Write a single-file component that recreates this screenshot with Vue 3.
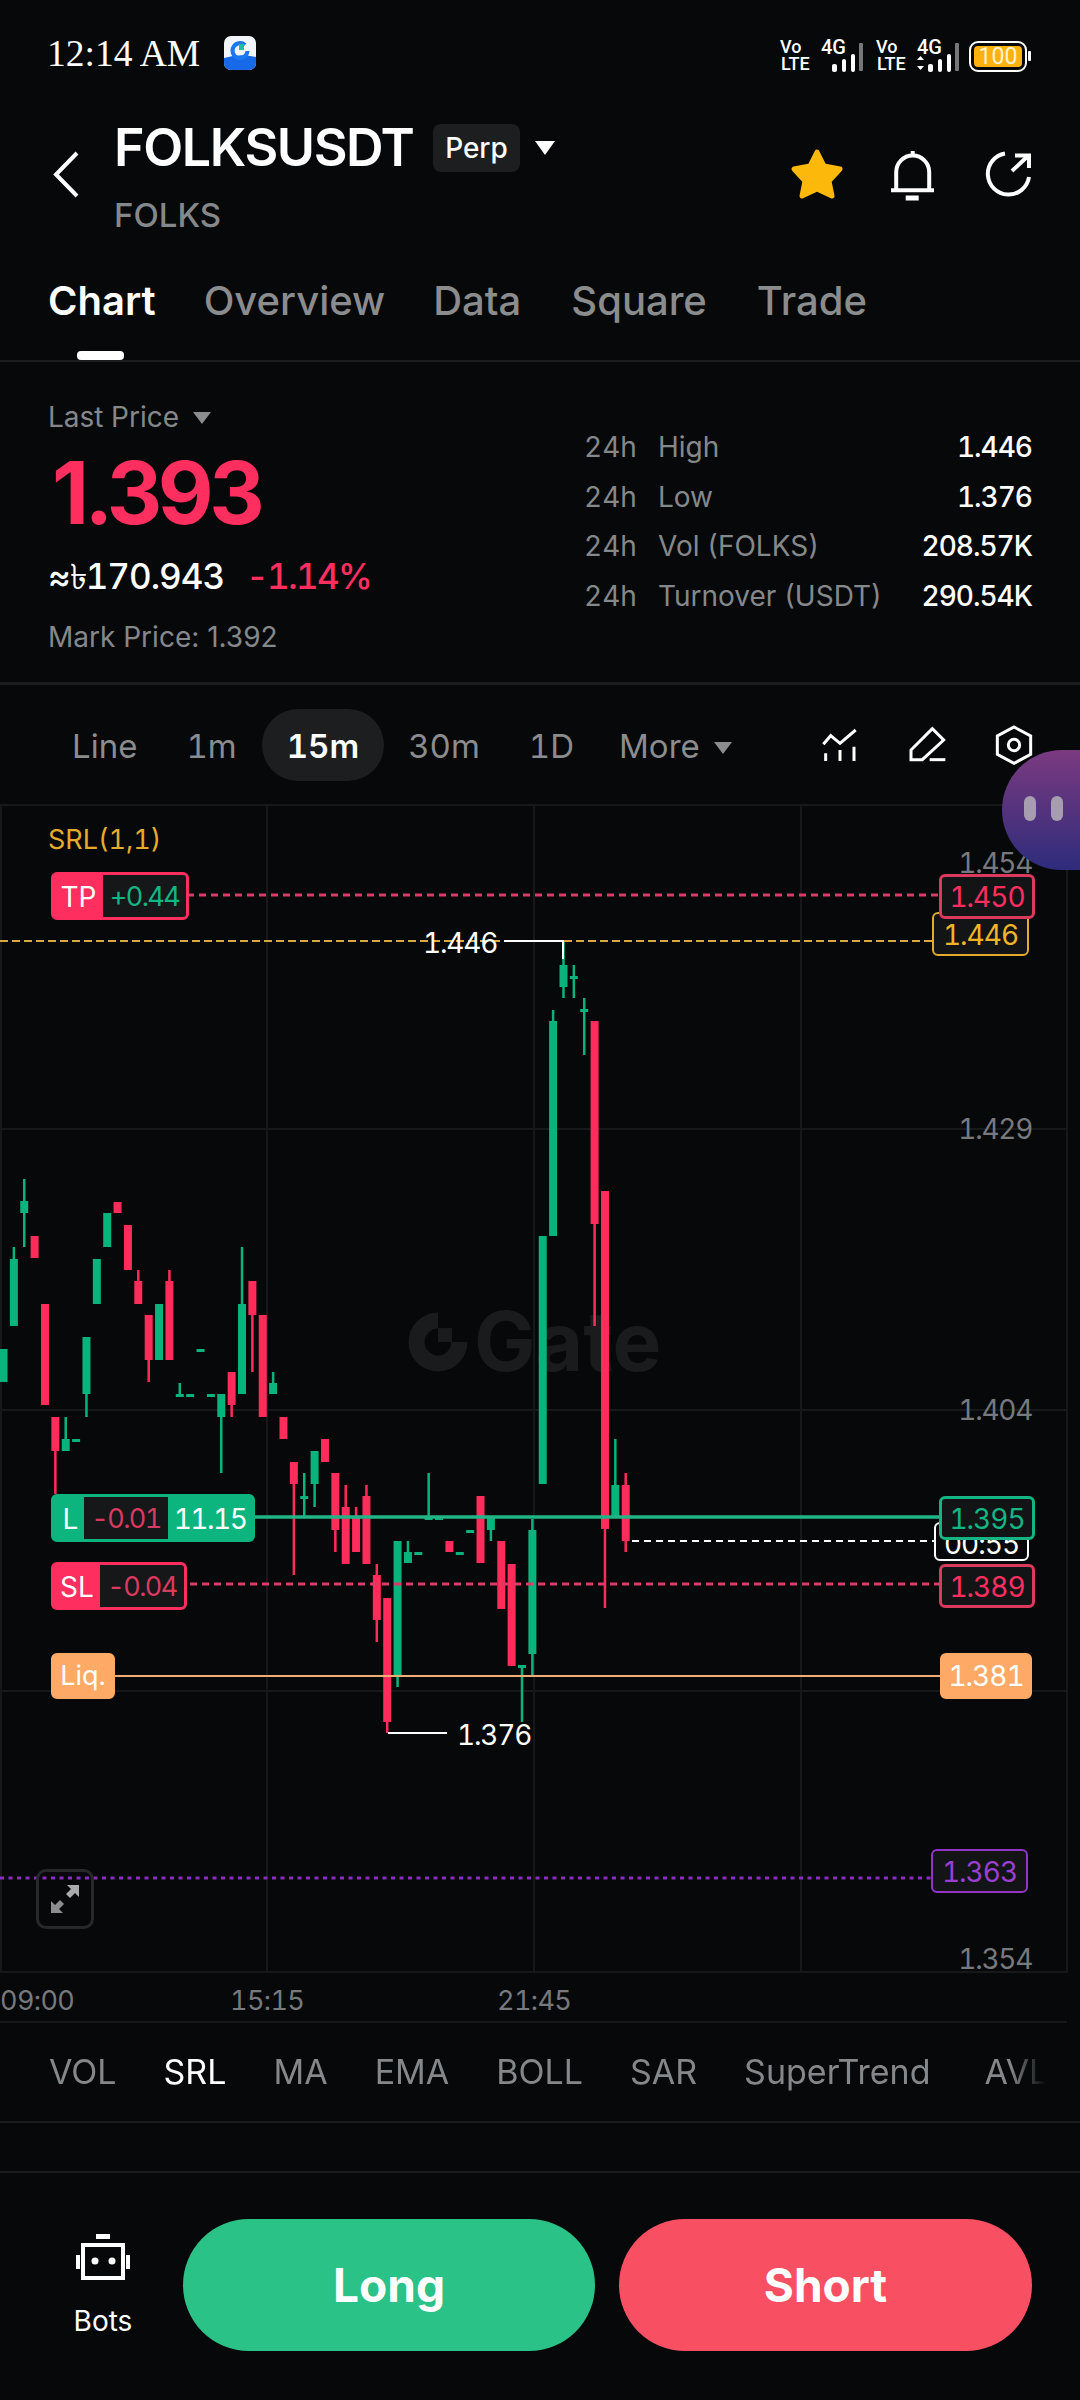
<template>
  <div class="page">
    <div class="status">
      <span class="clock">12:14 AM</span>
      <svg class="app-icon" viewBox="0 0 32 34">
        <rect width="32" height="34" rx="7" fill="#f2f6fc" />
        <path d="M0 22 Q16 17 32 21 V27 a7 7 0 0 1 -7 7 H7 a7 7 0 0 1 -7 -7Z" fill="#1769e8" />
        <path d="M21 9 A7.5 7.5 0 1 0 23.5 15" fill="none" stroke="#1a78f0" stroke-width="4" />
        <rect x="15" y="8" width="5" height="6" fill="#19c2a0" />
      </svg>
      <svg class="net" viewBox="775 30 260 46">
        <g class="net-text">
          <text x="780" y="51">Vo</text>
          <text x="781" y="68">LTE</text>
          <text x="821" y="52" class="big">4G</text>
          <text x="876" y="51">Vo</text>
          <text x="877" y="68">LTE</text>
          <text x="917" y="52" class="big">4G</text>
        </g>
        <g fill="#fff">
          <rect x="832" y="62" width="5" height="8" rx="2" />
          <rect x="842" y="57" width="4" height="13" rx="2" />
          <rect x="851" y="52" width="4" height="18" rx="2" />
          <path d="M917 57 l3.5 -4 l3.5 4Z M917 63 l3.5 4 l3.5 -4Z" transform="translate(0 1)" />
          <rect x="928" y="62" width="5" height="8" rx="2" />
          <rect x="938" y="57" width="4" height="13" rx="2" />
          <rect x="947" y="52" width="4" height="18" rx="2" />
        </g>
        <rect x="859" y="41" width="4" height="28" rx="1" fill="#777" />
        <rect x="955" y="41" width="4" height="28" rx="1" fill="#777" />
        <rect x="970" y="40" width="56" height="29" rx="8" fill="none" stroke="#fff" stroke-width="2" />
        <rect x="974" y="44" width="48" height="21" rx="4" fill="#fdb10e" />
        <rect x="1028" y="49" width="3" height="10" rx="1" fill="#fff" />
        <text x="998" y="62" class="batt">100</text>
      </svg>
    </div>

    <div class="header">
      <svg class="back" viewBox="0 0 30 50">
        <path d="M25 3 L4 24.5 L25 46" fill="none" stroke="#fff" stroke-width="4" />
      </svg>
      <div class="title">
        <div class="title-row">
          <span class="symbol">FOLKSUSDT</span>
          <span class="perp">Perp</span>
          <i class="caret caret-white"></i>
        </div>
        <div class="base">FOLKS</div>
      </div>
      <div class="actions">
        <svg class="star" viewBox="0 0 56 52">
          <path d="M28 4 L35 18 L51 21 L40 33 L43 48 L28 41 L13 48 L16 33 L5 21 L21 18Z" fill="#fdb90b" stroke="#fdb90b" stroke-width="5" stroke-linejoin="round" />
        </svg>
        <svg class="bell" viewBox="0 0 50 54">
          <g fill="none" stroke="#fff" stroke-width="4">
            <path d="M24.7 4 V9" />
            <path d="M8.2 43 V25 a16.5 16.5 0 0 1 33 0 V43" />
            <path d="M3 43.3 H46" />
          </g>
          <rect x="17.7" y="48.5" width="13" height="5" fill="#fff" />
        </svg>
        <svg class="share" viewBox="0 0 54 54">
          <g fill="none" stroke="#fff" stroke-width="4">
            <path d="M23 6.5 A20.7 20.7 0 1 0 47 30" />
            <path d="M30 24 L46 9" />
            <path d="M33 8.5 H47 V21" />
          </g>
        </svg>
      </div>
    </div>

    <div class="tabs">
      <span v-for="t in tabs" :key="t" class="tab" :class="{ active: t === 'Chart' }">{{ t }}</span>
    </div>

    <div class="summary">
      <div class="price-col">
        <div class="last">Last Price <i class="caret caret-gray"></i></div>
        <div class="price">1.393</div>
        <div class="fiat-row">
          <span class="fiat">≈৳170.943</span>
          <span class="change">-1.14%</span>
        </div>
        <div class="mark">Mark Price: 1.392</div>
      </div>
      <div class="stats">
        <div v-for="s in stats" :key="s.label" class="stat">
          <span class="h24">24h</span>
          <span class="stat-label">{{ s.label }}</span>
          <span class="stat-value">{{ s.value }}</span>
        </div>
      </div>
    </div>

    <div class="intervals">
      <span v-for="t in intervals" :key="t" class="interval" :class="{ on: t === '15m' }">{{ t }}</span>
      <span class="interval more">More <i class="caret caret-gray"></i></span>
      <div class="tools">
        <svg viewBox="30 30 120 120">
          <g fill="none" stroke="#fff" stroke-width="9">
            <path d="M40 88 L62 62 L90 85 L137 45" />
            <path d="M47 115 V138 M90 105 V138 M132 95 V138" />
          </g>
        </svg>
        <svg viewBox="290 30 120 120">
          <g fill="none" stroke="#fff" stroke-width="9">
            <path d="M302 134 V105 L366 41 L400 75 L336 134Z" />
            <path d="M358 134 H405" />
          </g>
        </svg>
        <svg viewBox="552 32 120 120">
          <g fill="none" stroke="#fff" stroke-width="9">
            <path d="M612 38 L662 65 V120 L612 147 L562 120 V65Z" />
            <circle cx="612" cy="92" r="17" />
          </g>
        </svg>
      </div>
    </div>

    <div class="chart">
      <div class="watermark">
        <svg viewBox="0 0 56 56">
          <path d="M28 8 A20 20 0 1 0 48 28" fill="none" stroke="#191b1d" stroke-width="15" />
          <rect x="28" y="15" width="13" height="13" fill="#191b1d" />
        </svg>
        <span>Gate</span>
      </div>
      <svg class="plot" viewBox="0 807 1080 1167">
        <g stroke="#16181a" stroke-width="2">
          <path v-for="x in gridX" :key="x" :d="`M${x} 807 V1974`" />
          <path v-for="y in gridY" :key="y" :d="`M0 ${y} H1067`" />
        </g>
        <g v-for="c in candles" :key="c.i" :fill="c.fill">
          <rect :x="c.x - 1.25" :y="c.wt" width="2.5" :height="c.wb - c.wt" />
          <rect :x="c.x - 4" :y="c.t" width="8" :height="Math.max(c.b - c.t, 3)" />
        </g>
        <path d="M115 896 H940" class="dash-red" />
        <path d="M0 942 H932" class="dash-yellow" />
        <path d="M504 942 H563 V960" fill="none" stroke="#fff" stroke-width="2" />
        <path d="M255 1518 H940" stroke="#20b487" stroke-width="3.5" />
        <path d="M632 1542 H934" stroke="#fff" stroke-width="2" stroke-dasharray="7 5" />
        <path d="M190 1585 H940" class="dash-red" />
        <path d="M115 1677 H940" stroke="#f0ad78" stroke-width="2" />
        <path d="M388 1734 H447" stroke="#fff" stroke-width="2" />
        <path d="M0 1879 H932" stroke="#8a2bc2" stroke-width="3" stroke-dasharray="4 4.5" />
      </svg>

      <span class="srl">SRL(1,1)</span>
      <span class="axis a1454">1.454</span>
      <span class="axis a1429">1.429</span>
      <span class="axis a1404">1.404</span>
      <span class="axis a1354">1.354</span>
      <span class="mark-hi">1.446</span>
      <span class="mark-lo">1.376</span>

      <div class="tag tag-tp"><b>TP</b><em class="up">+0.44</em></div>
      <div class="tag tag-l"><b>L</b><em class="down">-0.01</em><b class="lev">11.15</b></div>
      <div class="tag tag-sl"><b>SL</b><em class="down">-0.04</em></div>
      <div class="tag tag-liq"><b>Liq.</b></div>

      <span class="price-tag yellow p1446">1.446</span>
      <span class="price-tag red p1450">1.450</span>
      <span class="price-tag time">00:55</span>
      <span class="price-tag green p1395">1.395</span>
      <span class="price-tag red p1389">1.389</span>
      <span class="price-tag orange p1381">1.381</span>
      <span class="price-tag purple p1363">1.363</span>

      <div class="expand">
        <svg viewBox="0 0 36 36">
          <path d="M20 4 H32 V16 L28 12 L23 17 L19 13 L24 8Z" fill="#a9abad" />
          <path d="M16 32 H4 V20 L8 24 L13 19 L17 23 L12 28Z" fill="#8b8d8f" />
        </svg>
      </div>
    </div>

    <div class="times">
      <span class="t0">09:00</span>
      <span class="t1">15:15</span>
      <span class="t2">21:45</span>
    </div>

    <div class="indicators">
      <span v-for="n in indicators" :key="n" :class="{ on: n === 'SRL' }">{{ n }}</span>
    </div>

    <div class="spacer"></div>

    <div class="bottom">
      <div class="bots">
        <svg viewBox="0 0 56 56">
          <rect x="21" y="1" width="14" height="5" fill="#fff" />
          <path d="M8 12 H48 V45 H8Z" fill="none" stroke="#fff" stroke-width="4" />
          <path d="M3 22 V36 M53 22 V36" stroke="#fff" stroke-width="4" />
          <circle cx="20" cy="28" r="3.5" fill="#fff" />
          <circle cx="37" cy="28" r="3.5" fill="#fff" />
        </svg>
        <span>Bots</span>
      </div>
      <button class="trade long">Long</button>
      <button class="trade short">Short</button>
    </div>

    <div class="bubble">
      <i></i><i></i>
    </div>
  </div>
</template>

<script setup>
const tabs = ['Chart', 'Overview', 'Data', 'Square', 'Trade']
const intervals = ['Line', '1m', '15m', '30m', '1D']
const indicators = ['VOL', 'SRL', 'MA', 'EMA', 'BOLL', 'SAR', 'SuperTrend', 'AVL']
const stats = [
  { label: 'High', value: '1.446' },
  { label: 'Low', value: '1.376' },
  { label: 'Vol (FOLKS)', value: '208.57K' },
  { label: 'Turnover (USDT)', value: '290.54K' },
]
const gridX = [1, 267, 534, 801, 1067]
const gridY = [1130, 1411, 1692, 1973]

// index, color, body top, body bottom, wick top, wick bottom (page y)
const raw = [
  [0, 'g', 1350, 1383],
  [1, 'g', 1260, 1327, 1248],
  [2, 'g', 1202, 1214, 1180, 1248],
  [3, 'r', 1237, 1259],
  [4, 'r', 1305, 1406],
  [5, 'r', 1418, 1452, 1418, 1495],
  [6, 'g', 1440, 1452, 1418],
  [7, 'g', 1440, 1440],
  [8, 'g', 1338, 1395, 1338, 1418],
  [9, 'g', 1260, 1305],
  [10, 'g', 1214, 1248],
  [11, 'r', 1203, 1214],
  [12, 'r', 1226, 1271],
  [13, 'r', 1282, 1305, 1271],
  [14, 'r', 1316, 1361, 1316, 1383],
  [15, 'g', 1305, 1361],
  [16, 'r', 1282, 1361, 1271],
  [17, 'g', 1395, 1395, 1384],
  [18, 'g', 1395, 1395],
  [19, 'g', 1350, 1350],
  [20, 'g', 1395, 1395],
  [21, 'g', 1395, 1418, 1395, 1474],
  [22, 'r', 1373, 1406, 1373, 1418],
  [23, 'g', 1305, 1395, 1248],
  [24, 'r', 1282, 1316, 1282, 1373],
  [25, 'r', 1316, 1418],
  [26, 'g', 1384, 1395, 1373],
  [27, 'r', 1418, 1440],
  [28, 'r', 1463, 1485, 1463, 1576],
  [29, 'g', 1497, 1497, 1474, 1518],
  [30, 'g', 1452, 1485, 1452, 1508],
  [31, 'r', 1440, 1463],
  [32, 'r', 1474, 1531, 1474, 1553],
  [33, 'r', 1508, 1565, 1486],
  [34, 'r', 1518, 1553, 1508],
  [35, 'r', 1497, 1565, 1486],
  [36, 'r', 1576, 1621, 1565, 1643],
  [37, 'r', 1599, 1723, 1599, 1734],
  [38, 'g', 1542, 1677, 1542, 1688],
  [39, 'g', 1553, 1564, 1542],
  [40, 'g', 1553, 1553],
  [41, 'g', 1518, 1518, 1474],
  [42, 'g', 1518, 1518],
  [43, 'r', 1542, 1553],
  [44, 'g', 1553, 1553],
  [45, 'g', 1531, 1531],
  [46, 'r', 1497, 1564],
  [47, 'g', 1519, 1531, 1519, 1542],
  [48, 'r', 1542, 1610],
  [49, 'r', 1565, 1667],
  [50, 'g', 1666, 1666, 1666, 1723],
  [51, 'g', 1531, 1655, 1520, 1677],
  [52, 'g', 1237, 1485],
  [53, 'g', 1022, 1237, 1011],
  [54, 'g', 966, 988, 942, 999],
  [55, 'g', 977, 977, 966, 999],
  [56, 'g', 1010, 1010, 999, 1056],
  [57, 'r', 1022, 1225, 1022, 1327],
  [58, 'r', 1192, 1530, 1192, 1609],
  [59, 'g', 1486, 1518, 1440],
  [60, 'r', 1486, 1542, 1474, 1553],
]
const candles = raw.map(([i, c, t, b, wt, wb]) => ({
  i,
  x: 3.5 + 10.37 * i,
  fill: c === 'g' ? '#08b47b' : '#fe2c5b',
  t,
  b,
  wt: wt ?? t,
  wb: wb ?? b,
}))
</script>

<style>
html, body { margin: 0; background: #060809; }
</style>

<style scoped>
.page {
  position: relative;
  width: 1080px;
  height: 2400px;
  overflow: hidden;
  background: #060809;
  color: #fff;
  font-family: Inter, "Noto Sans", "DejaVu Sans", sans-serif;
  font-variant-numeric: tabular-nums;
}
.status {
  display: flex;
  align-items: center;
  height: 106px;
  padding: 0 47px;
  box-sizing: border-box;
}
.clock {
  font-family: "Liberation Serif", serif;
  font-size: 37.5px;
  width: 177px;
}
.app-icon { width: 32px; height: 34px; }
.net { width: 260px; height: 46px; margin-left: auto; margin-right: -2px; margin-top: 4px; }
.net-text text { font-size: 18px; font-weight: 500; fill: #fff; font-family: Roboto, sans-serif; }
.net-text text.big { font-size: 20px; }
.batt { font-size: 23px; fill: #fff3d0; text-anchor: middle; font-family: Roboto, sans-serif; }

.header {
  display: flex;
  height: 150px;
  padding-left: 52px;
  box-sizing: border-box;
}
.back { width: 30px; height: 50px; margin-top: 44px; margin-right: 32px; }
.title { width: 670px; }
.title-row { display: flex; align-items: center; height: 70px; margin-top: 6px; }
.symbol { font-size: 52px; font-weight: 600; letter-spacing: -1.4px; width: 319px; }
.perp {
  width: 87px;
  height: 48px;
  line-height: 48px;
  border-radius: 8px;
  background: #1c1e20;
  text-align: center;
  font-size: 28px;
  font-weight: 500;
  margin-right: 15px;
  margin-top: 2px;
}
.title-row .caret { margin-top: 2px; }
.base { font-size: 33px; font-weight: 500; color: #85888b; margin-top: 13px; line-height: 40px; }
.caret {
  display: inline-block;
  border-left: 10px solid transparent;
  border-right: 10px solid transparent;
  border-top: 14px solid #fff;
}
.caret-gray { border-left-width: 9px; border-right-width: 9px; border-top: 12px solid #8a8c8e; }
.actions { display: flex; align-items: center; height: 54px; margin-top: 41px; }
.star { width: 56px; height: 52px; margin-left: 5px; }
.bell { width: 50px; height: 54px; margin-left: 43px; }
.share { width: 54px; height: 54px; margin-left: 44px; }

.tabs {
  display: flex;
  gap: 50px;
  height: 106px;
  padding: 21px 48px 0;
  box-sizing: border-box;
  border-bottom: 2px solid #1a1c1e;
  font-size: 40px;
  font-weight: 500;
  line-height: 48px;
  color: #8a8c8e;
}
.tab { position: relative; }
.tab:nth-child(2) { margin-right: -2px; }
.tab.active { color: #fff; font-weight: 600; margin-right: -2px; }
.tab.active::after {
  content: "";
  position: absolute;
  left: 29px;
  top: 74px;
  width: 47px;
  height: 9px;
  border-radius: 4px;
  background: #fff;
}

.summary {
  display: flex;
  height: 323px;
  box-sizing: border-box;
  border-bottom: 3px solid #1a1c1e;
  padding-left: 48px;
}
.price-col { width: 536px; }
.last { font-size: 28px; color: #85888b; margin-top: 38px; line-height: 34px; }
.last .caret { margin-left: 6px; vertical-align: 3px; }
.price {
  font-size: 86px;
  font-weight: 700;
  color: #fe2e5f;
  font-variant-numeric: normal;
  letter-spacing: -4.5px;
  line-height: 96px;
  margin-left: 4px;
  margin-top: 11px;
}
.fiat-row { display: flex; margin-top: 14px; line-height: 42px; font-size: 35px; font-weight: 500; }
.fiat { width: 198px; letter-spacing: -1px; }
.change { color: #fe2e5f; letter-spacing: -1.6px; }
.mark { font-size: 28px; color: #85888b; margin-top: 23px; line-height: 34px; font-variant-numeric: normal; }
.stats { width: 448px; padding-top: 65px; font-size: 28px; }
.stat { display: flex; height: 49.7px; line-height: 40px; color: #85888b; }
.h24 { width: 74px; }
.stat-value { margin-left: auto; color: #fff; font-weight: 500; letter-spacing: -1px; }

.intervals {
  display: flex;
  align-items: center;
  height: 121px;
  padding: 0 0 0 48px;
  box-sizing: border-box;
  border-bottom: 2px solid #16181a;
  font-size: 33px;
  color: #8a8c8e;
}
.interval {
  padding: 0 24px;
  height: 72px;
  line-height: 74px;
  margin-right: 1px;
}
.interval.on {
  color: #fff;
  font-weight: 600;
  background: #1c1e20;
  border-radius: 36px;
  padding: 0 25px;
  margin-right: 0;
}
.more { margin-left: -4px; padding-right: 0; white-space: nowrap; }
.more .caret { margin-left: 5px; vertical-align: 4px; }
.tools { display: flex; margin-left: auto; gap: 47px; margin-right: 46px; }
.tools svg { width: 40px; height: 40px; }

.chart {
  position: relative;
  height: 1167px;
  font-size: 28px;
}
.plot { position: absolute; inset: 0; width: 1080px; height: 1167px; }
.dash-red { stroke: #d93a68; stroke-width: 3; stroke-dasharray: 7 5; }
.dash-yellow { stroke: #d9a93f; stroke-width: 2; stroke-dasharray: 8 4; }
.watermark {
  position: absolute;
  left: 408px;
  top: 506px;
  display: flex;
  align-items: center;
  gap: 6px;
  color: #191b1d;
  font-size: 82px;
  font-weight: 700;
  line-height: 56px;
}
.watermark svg { width: 60px; height: 60px; }
.srl { position: absolute; left: 48px; top: 17px; line-height: 34px; font-size: 27px; color: #e5ac2c; }
.axis { position: absolute; right: 48px; line-height: 36px; color: #77797c; letter-spacing: -1.3px; }
.a1454 { top: 39px; }
.a1429 { top: 305px; }
.a1404 { top: 586px; }
.a1354 { top: 1135px; }
.mark-hi { position: absolute; left: 423px; top: 119px; line-height: 36px; letter-spacing: -1.2px; }
.mark-lo { position: absolute; left: 457px; top: 911px; line-height: 36px; letter-spacing: -1.2px; }

.tag {
  position: absolute;
  left: 51px;
  display: flex;
  height: 48px;
  box-sizing: border-box;
  border: 3px solid #fe2e5f;
  border-radius: 6px;
  background: #fe2e5f;
  overflow: hidden;
  line-height: 44px;
}
.tag b { font-weight: 400; }
.tag em {
  font-style: normal;
  background: #151719;
  flex: 1;
  text-align: center;
  font-size: 27px;
  letter-spacing: -1.6px;
}
.tag .up { color: #14b583; }
.tag .down { color: #d93a5e; }
.tag-tp { top: 66px; width: 138px; }
.tag-tp b { width: 49px; text-align: center; }
.tag-l { top: 688px; width: 204px; background: #0cb57d; border-color: #0cb57d; }
.tag-l > b:first-child { width: 30px; text-align: center; padding-left: 3px; box-sizing: border-box; }
.tag-l em { flex: none; width: 84px; }
.tag-l .lev { flex: 1; text-align: center; letter-spacing: -1.5px; }
.tag-sl { top: 756px; width: 136px; }
.tag-sl b { width: 46px; text-align: center; }
.tag-liq { top: 847px; width: 64px; height: 46px; background: #feaa66; border-color: #feaa66; }
.tag-liq b { width: 100%; text-align: center; font-size: 27px; line-height: 40px; }

.price-tag {
  position: absolute;
  left: 939px;
  box-sizing: border-box;
  width: 96px;
  height: 44px;
  line-height: 40px;
  text-align: center;
  border: 3px solid;
  border-radius: 6px;
  background: #121416;
  letter-spacing: -1px;
}
.yellow { border-width: 2px; border-color: #e5ac2c; color: #f0b429; line-height: 42px; }
.red { border-color: #d93a5e; color: #fe2e5f; }
.green { border-color: #14b583; color: #14b583; }
.orange { border-color: #feaa66; background: #feaa66; color: #fff; }
.purple { border-width: 2px; border-color: #9334c9; color: #9a3fd0; line-height: 42px; }
.time { left: 934px; width: 95px; height: 39px; top: 716px; border: 2px solid #fff; background: #060809; color: #fff; line-height: 40px; overflow: hidden; }
.p1450 { top: 68px; height: 45px; }
.p1446 { left: 932px; width: 97px; top: 106px; }
.p1395 { top: 690px; }
.p1389 { top: 758px; }
.p1381 { left: 940px; width: 92px; top: 847px; height: 46px; }
.p1363 { left: 931px; width: 97px; top: 1043px; }
.expand {
  position: absolute;
  left: 36px;
  top: 1063px;
  width: 58px;
  height: 60px;
  box-sizing: border-box;
  border: 3px solid #26282a;
  border-radius: 10px;
  display: flex;
  align-items: center;
  justify-content: center;
}
.expand svg { width: 36px; height: 36px; }

.times {
  position: relative;
  height: 50px;
  width: 1067px;
  border-bottom: 2px solid #16181a;
  box-sizing: border-box;
  font-size: 27px;
  line-height: 56px;
  color: #77797c;
  letter-spacing: -.6px;
}
.times span { position: absolute; top: 0; }
.t0 { left: 0; }
.t1 { left: 230px; }
.t2 { left: 497px; }

.indicators {
  display: flex;
  gap: 47px;
  height: 98px;
  width: 1046px;
  padding-left: 49px;
  box-sizing: border-box;
  overflow: hidden;
  font-size: 34px;
  line-height: 98px;
  color: #85888b;
  -webkit-mask-image: linear-gradient(to right, #000 1010px, transparent 1046px);
  mask-image: linear-gradient(to right, #000 1010px, transparent 1046px);
}
.indicators span:nth-child(7) { margin-right: 7px; }
.indicators .on { color: #fff; }
.spacer {
  height: 52px;
  border-top: 2px solid #1a1c1e;
  border-bottom: 2px solid #1a1c1e;
  box-sizing: border-box;
}
.bottom {
  display: flex;
  align-items: flex-start;
  padding: 46px 48px 0 47px;
  gap: 24px;
}
.bots {
  width: 112px;
  display: flex;
  flex-direction: column;
  align-items: center;
  font-size: 28px;
  margin-top: 14px;
}
.bots svg { width: 56px; height: 56px; margin-bottom: 15px; }
.trade {
  width: 412px;
  height: 132px;
  border: 0;
  border-radius: 66px;
  color: #fff;
  font-family: inherit;
  font-size: 46px;
  font-weight: 700;
}
.long { background: #2bc287; }
.short { background: #f84f62; width: 413px; }

.bubble {
  position: absolute;
  left: 1002px;
  top: 750px;
  width: 140px;
  height: 120px;
  border-radius: 60px;
  background: linear-gradient(#7a3a80, #2e2c7c);
}
.bubble i {
  position: absolute;
  top: 46px;
  width: 12px;
  height: 25px;
  border-radius: 6px;
  background: #a69db0;
}
.bubble i:first-child { left: 22px; }
.bubble i:last-child { left: 49px; }
</style>
